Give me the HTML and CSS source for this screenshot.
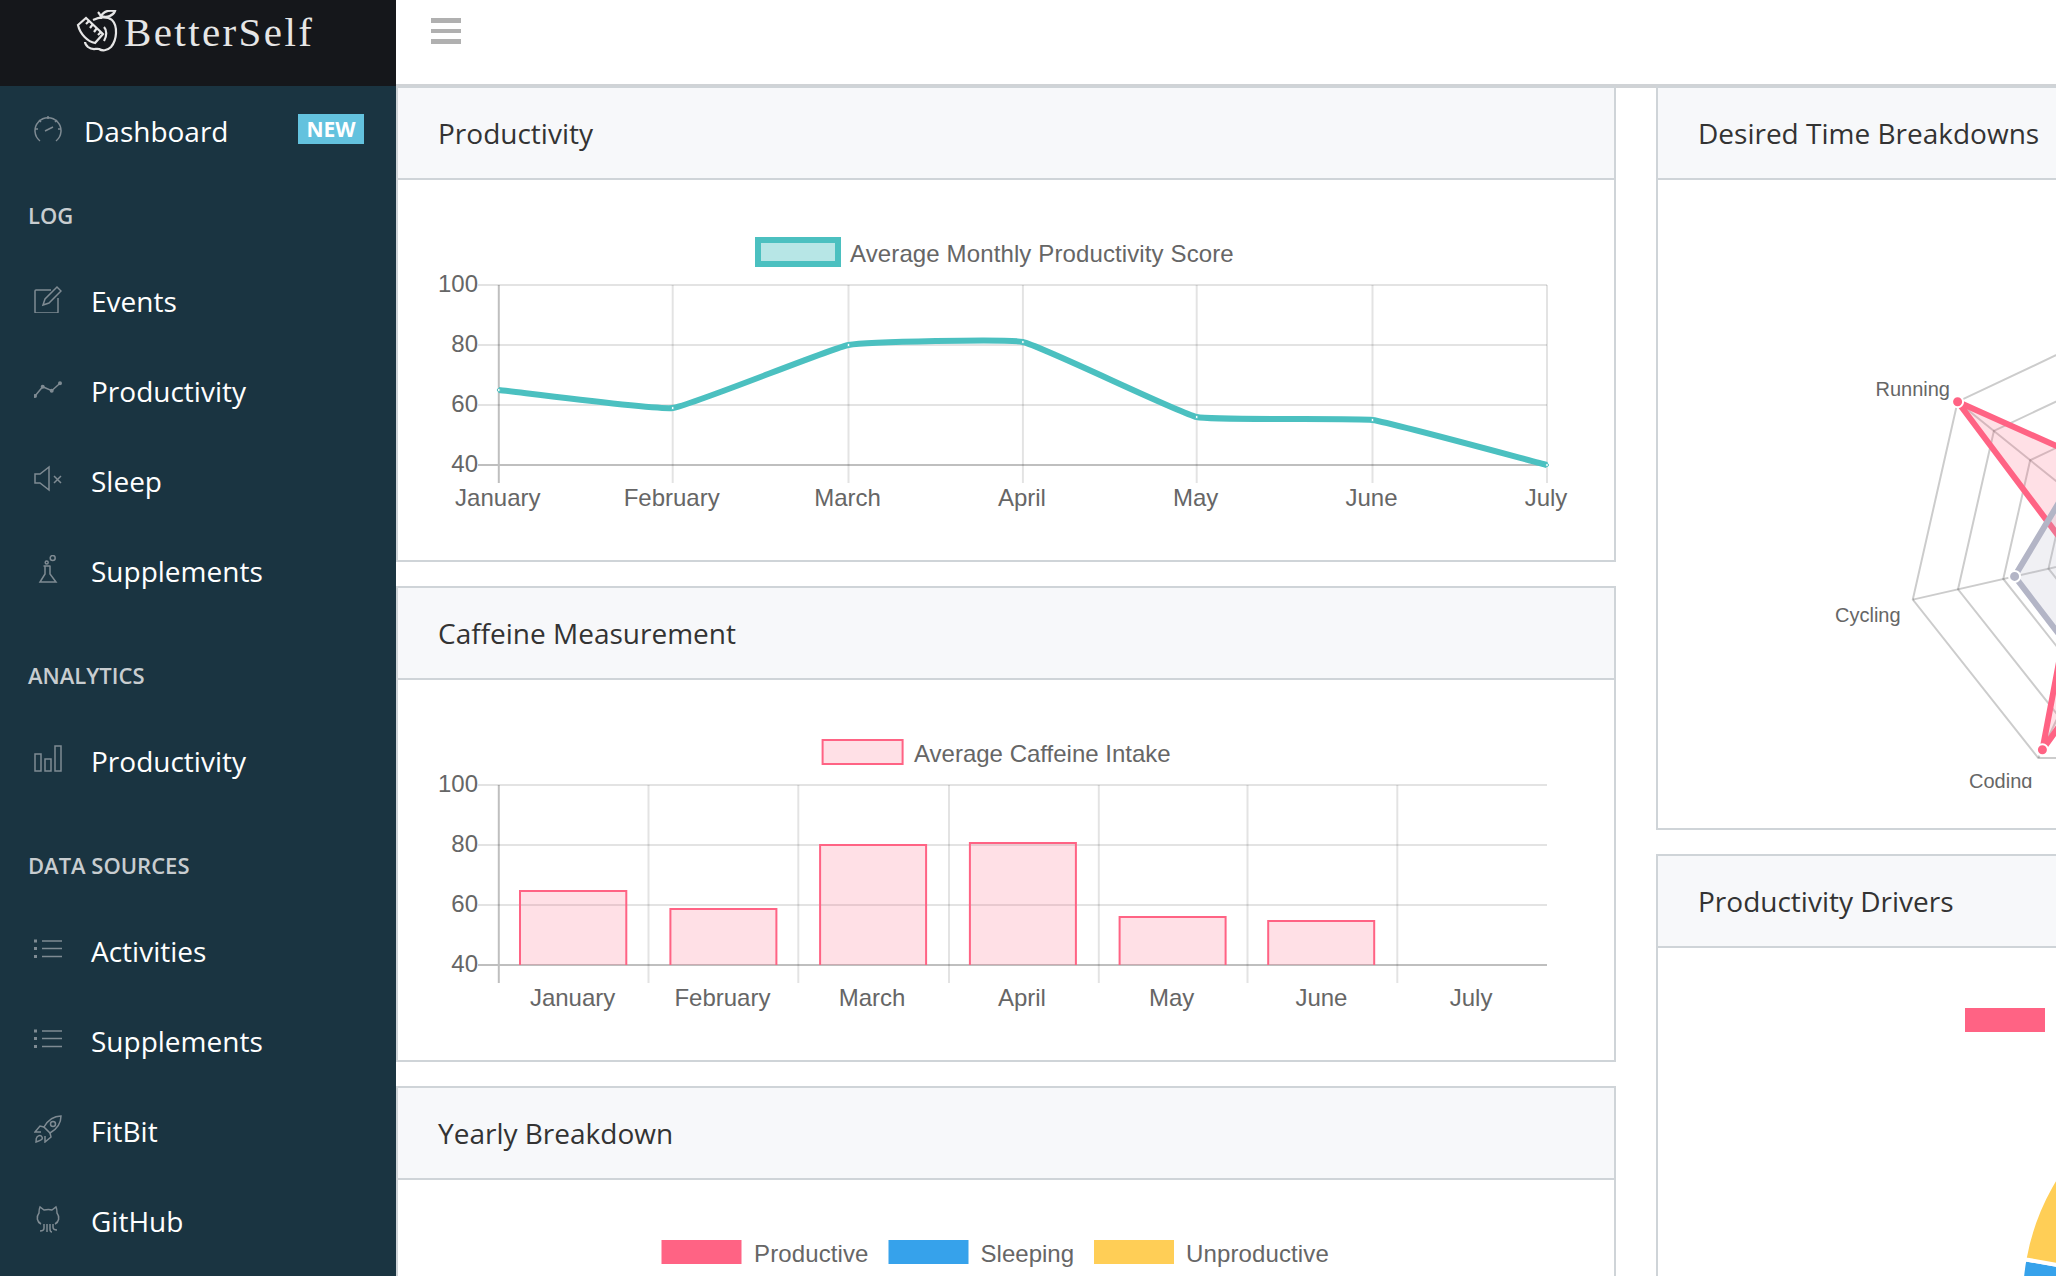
FILE: index.html
```html
<!DOCTYPE html>
<html lang="en">
<head>
  <meta charset="UTF-8">
  <title>BetterSelf</title>
  <meta name="viewport" content="width=device-width, initial-scale=1.0">
  <link rel="stylesheet" href="styles.css">
</head>
<body>
<svg class="sprite" width="0" height="0">
  <symbol id="icon-list" viewBox="0 0 28 28">
    <path class="icon-fill" d="M0 4.500h3v3H0zM0 12h3v3H0zM0 20h3v3H0z"/>
    <path d="M8 6h20M8 13.500h20M8 21.500h20"/>
  </symbol>
</svg>
<div class="layout">
  <aside class="sidebar">
    <div class="brand">
      <svg class="brand-logo" viewBox="0 0 42 42" width="42" height="42">
        <path d="M17 10c6-3 14-4 19 0 6 6 5 20-1 27-4 4-9 4-12 2-3-1-6 2-11-2-2-2-3-4-3-5"/>
        <path d="M25 9c0-3-1-5-3-7M25 6c3-5 9-6 14-5-2 5-8 7-14 5z"/>
        <path d="M2 15l8-7 17 16-8 9C12 32 4 24 2 15z"/>
        <path d="M13 11l-3 3M17 14l-3 4M21 18l-3 4M25 22l-3 3"/>
        <path d="M28 17c3 3 3 9 0 14"/>
      </svg>
      <span class="brand-name">BetterSelf</span>
    </div>
    <nav>
      <a class="nav-link nav-link-home" href="#">
        <svg class="nav-icon" viewBox="0 0 28 28"><path d="M6 26A13 13 0 1 1 22 26"/><path d="M14 1v3M5 5l2 2M23 5l-2 2M1 14h3M27 14h-3"/><path d="M11 16l8-4"/></svg>
        <span>Dashboard</span>
        <span class="badge">NEW</span>
      </a>
      <div class="nav-group">
        <div class="nav-title">LOG</div>
        <a class="nav-link" href="#">
          <svg class="nav-icon" viewBox="0 0 28 28"><path d="M17 5H2a1 1 0 0 0-1 1v21a1 1 0 0 0 1 1h21a1 1 0 0 0 1-1V13"/><path d="M9 20l2-6L23 2l4 4-12 12z"/></svg>
          <span>Events</span>
        </a>
        <a class="nav-link" href="#">
          <svg class="nav-icon" viewBox="0 0 28 28"><path d="M1 21l7.700-9.300 9 4L26 8.300"/><path class="icon-fill" d="M3 21a2 2 0 1 1-4 0 2 2 0 0 1 4 0zM10.700 11.700a2 2 0 1 1-4 0 2 2 0 0 1 4 0zM19.700 15.700a2 2 0 1 1-4 0 2 2 0 0 1 4 0zM28 8.300a2 2 0 1 1-4 0 2 2 0 0 1 4 0z"/></svg>
          <span>Productivity</span>
        </a>
        <a class="nav-link" href="#">
          <svg class="nav-icon" viewBox="0 0 28 28"><path d="M1 9h5l9-7v23l-9-7H1z"/><path d="M20 11l7 7M27 11l-7 7"/></svg>
          <span>Sleep</span>
        </a>
        <a class="nav-link" href="#">
          <svg class="nav-icon" viewBox="0 0 28 28"><circle cx="18.700" cy="3" r="2.500"/><circle cx="12.700" cy="7.500" r="1.500"/><path d="M9.500 11h7M11 11v8l-5 8h16l-6-8v-8"/></svg>
          <span>Supplements</span>
        </a>
      </div>
      <div class="nav-group">
        <div class="nav-title">ANALYTICS</div>
        <a class="nav-link" href="#">
          <svg class="nav-icon" viewBox="0 0 28 28"><path d="M1 9h6v17H1zM11 14h6v12h-6zM21 1h6v25h-6z"/></svg>
          <span>Productivity</span>
        </a>
      </div>
      <div class="nav-group">
        <div class="nav-title">DATA SOURCES</div>
        <a class="nav-link" href="#">
          <svg class="nav-icon"><use href="#icon-list"/></svg>
          <span>Activities</span>
        </a>
        <a class="nav-link" href="#">
          <svg class="nav-icon"><use href="#icon-list"/></svg>
          <span>Supplements</span>
        </a>
        <a class="nav-link" href="#">
          <svg class="nav-icon" viewBox="0 0 28 28"><path d="M27 1c-7 0-13 4-17 11l6 6c7-4 11-10 11-17z"/><circle cx="19" cy="9" r="2.500"/><path d="M10 12l-4-1-5 6h6M16 18l1 4-6 5v-6"/><path d="M3 22c2-2 4-2 5 0s0 3-6 5c0-2 0-4 1-5z"/></svg>
          <span>FitBit</span>
        </a>
        <a class="nav-link" href="#">
          <svg class="nav-icon" viewBox="0 0 28 28"><path d="M7 19C3 17 2 12 5 8c0-2 0-4 1-6l4 3c3-.6 6-.6 8 0l4-3c1 2 1 4 1 6 3 4 2 9-2 11"/><path d="M10 19v4c0 2-2 3-4 3M13 19v8M16 19v5c0 2 1 3 2 3M19 19v3c0 2 2 3 4 3"/></svg>
          <span>GitHub</span>
        </a>
      </div>
    </nav>
  </aside>

  <div class="main">
    <header class="topbar">
      <span class="burger"><i></i><i></i><i></i></span>
    </header>
    <div class="columns">
      <div class="column">
        <section class="card">
          <div class="card-header">Productivity</div>
          <svg class="chart" width="1216" height="380" viewBox="398 180 1216 380">
            <rect class="legend-line" x="758" y="240" width="80" height="24"/>
            <text class="legend-wide" x="850" y="262">Average Monthly Productivity Score</text>

            <path class="grid" d="M478 285H1547M478 345H1547M478 405H1547"/>
            <path class="grid" d="M672.700 285V483M848.500 285V483M1022.900 285V483M1196.700 285V483M1372.500 285V483M1547 285V483"/>
            <path class="grid-zero" d="M478 465H1547M498.800 285V483"/>

            <text class="tick-y" x="478" y="292">100</text>
            <text class="tick-y" x="478" y="352">80</text>
            <text class="tick-y" x="478" y="412">60</text>
            <text class="tick-y" x="478" y="472">40</text>

            <text class="tick-x" x="497.800" y="506">January</text>
            <text class="tick-x" x="671.700" y="506">February</text>
            <text class="tick-x" x="847.500" y="506">March</text>
            <text class="tick-x" x="1021.900" y="506">April</text>
            <text class="tick-x" x="1195.700" y="506">May</text>
            <text class="tick-x" x="1371.500" y="506">June</text>
            <text class="tick-x" x="1546" y="506">July</text>

            <path class="line" d="M498.800 390C516.300 391.800 655.700 410.200 672.700 408C690.700 405.700 830.500 348.400 848.500 345C865.400 341.800 1006.200 338.600 1022.900 342C1041.100 345.750 1178.500 412.900 1196.700 417C1213.400 420.700 1355.300 417.600 1372.500 420C1390.200 422.400 1529.500 460.500 1547 465"/>
            <circle class="line-point" cx="498.800" cy="390" r="1.500"/>
            <circle class="line-point" cx="672.700" cy="408" r="1.500"/>
            <circle class="line-point" cx="848.500" cy="345" r="1.500"/>
            <circle class="line-point" cx="1022.900" cy="342" r="1.500"/>
            <circle class="line-point" cx="1196.700" cy="417" r="1.500"/>
            <circle class="line-point" cx="1372.500" cy="420" r="1.500"/>
            <circle class="line-point" cx="1547" cy="465" r="1.500"/>
          </svg>
        </section>

        <section class="card">
          <div class="card-header">Caffeine Measurement</div>
          <svg class="chart" width="1216" height="380" viewBox="398 680 1216 380">
            <rect class="legend-bar" x="822.600" y="740" width="80" height="24"/>
            <text x="914" y="762">Average Caffeine Intake</text>

            <path class="grid" d="M478 785H1547M478 845H1547M478 905H1547"/>
            <path class="grid" d="M648.500 785V983M798.300 785V983M949 785V983M1098.800 785V983M1247.500 785V983M1397.300 785V983"/>
            <path class="grid-zero" d="M478 965H1547M498.800 785V983"/>

            <text class="tick-y" x="478" y="792">100</text>
            <text class="tick-y" x="478" y="852">80</text>
            <text class="tick-y" x="478" y="912">60</text>
            <text class="tick-y" x="478" y="972">40</text>

            <path class="bar" d="M520 965V891H626.300V965"/>
            <path class="bar" d="M670.400 965V909H776.400V965"/>
            <path class="bar" d="M820.100 965V845H926.100V965"/>
            <path class="bar" d="M969.900 965V843H1075.900V965"/>
            <path class="bar" d="M1119.600 965V917H1225.600V965"/>
            <path class="bar" d="M1268.200 965V921H1374.200V965"/>

            <text class="tick-x" x="572.600" y="1006">January</text>
            <text class="tick-x" x="722.400" y="1006">February</text>
            <text class="tick-x" x="872.100" y="1006">March</text>
            <text class="tick-x" x="1021.900" y="1006">April</text>
            <text class="tick-x" x="1171.600" y="1006">May</text>
            <text class="tick-x" x="1321.400" y="1006">June</text>
            <text class="tick-x" x="1471.100" y="1006">July</text>
          </svg>
        </section>

        <section class="card">
          <div class="card-header">Yearly Breakdown</div>
          <svg class="chart" width="1216" height="380" viewBox="398 1180 1216 380">
            <rect class="pink" x="661.500" y="1240" width="80" height="24"/>
            <text class="legend-wide" x="754" y="1262">Productive</text>
            <rect class="blue" x="888.500" y="1240" width="80" height="24"/>
            <text x="980.600" y="1262">Sleeping</text>
            <rect class="yellow" x="1094" y="1240" width="80" height="24"/>
            <text class="legend-wide" x="1186" y="1262">Unproductive</text>
          </svg>
        </section>
      </div>

      <div class="column">
        <section class="card">
          <div class="card-header">Desired Time Breakdowns</div>
          <div class="card-body-radar">
            <svg class="chart" width="1216" height="608" viewBox="1658 180 1216 608">
              <g transform="translate(2139 548)">
                <polygon class="ring" points="0,-232 181.400,-146.300 226.200,51.600 100.700,210 -100.700,210 -226.200,51.600 -181.400,-146.300"/>
                <polygon class="ring" transform="scale(.8)" points="0,-232 181.400,-146.300 226.200,51.600 100.700,210 -100.700,210 -226.200,51.600 -181.400,-146.300"/>
                <polygon class="ring" transform="scale(.6)" points="0,-232 181.400,-146.300 226.200,51.600 100.700,210 -100.700,210 -226.200,51.600 -181.400,-146.300"/>
                <polygon class="ring" transform="scale(.4)" points="0,-232 181.400,-146.300 226.200,51.600 100.700,210 -100.700,210 -226.200,51.600 -181.400,-146.300"/>
                <polygon class="ring" transform="scale(.2)" points="0,-232 181.400,-146.300 226.200,51.600 100.700,210 -100.700,210 -226.200,51.600 -181.400,-146.300"/>
                <path class="ring" d="M0 0V-232M0 0L181.400 -146.300M0 0L226.200 51.600M0 0L100.700 210M0 0L-100.700 210M0 0L-226.200 51.600M0 0L-181.400 -146.300"/>

                <polygon class="radar-pink" points="0,-65 87.100,-69.400 90.500,20.600 19.100,39.700 -96.600,201.800 -61.100,13.900 -181.400,-146.300"/>
                <polygon class="radar-gray" points="0,-150.800 107,-85.300 203.600,46.500 81.500,169.300 -56.400,117 -124.400,28.400 -72.600,-57.900"/>

                <circle class="point-pink" cx="-181.400" cy="-146.300" r="5.500"/>
                <circle class="point-pink" cx="-96.600" cy="201.800" r="5.500"/>
                <circle class="point-pink" cx="-61.100" cy="13.900" r="5.500"/>
                <circle class="point-gray" cx="-124.400" cy="28.400" r="5.500"/>
                <circle class="point-gray" cx="-72.600" cy="-57.900" r="5.500"/>
                <circle class="point-gray" cx="-56.400" cy="117" r="5.500"/>
              </g>
              <text class="radar-label tick-y" x="1950" y="396">Running</text>
              <text class="radar-label" x="1835" y="622">Cycling</text>
              <text class="radar-label" x="1969" y="788">Coding</text>
            </svg>
          </div>
        </section>

        <section class="card">
          <div class="card-header">Productivity Drivers</div>
          <svg class="chart" width="1216" height="500" viewBox="1658 948 1216 500">
            <rect class="pink" x="1965" y="1008" width="80" height="24"/>
            <path class="slice pink" d="M2250 1299L2250 1070A229 229 0 1 1 2051.700 1413.500Z"/>
            <path class="slice blue" d="M2250 1299L2051.700 1413.500A229 229 0 0 1 2024.500 1259.200Z"/>
            <path class="slice yellow" d="M2250 1299L2024.500 1259.200A229 229 0 0 1 2250 1070Z"/>
          </svg>
        </section>
      </div>
    </div>
  </div>
</div>
</body>
</html>
```
FILE: styles.css
```css
html, body {
  margin: 0;
  height: 100%;
  overflow: hidden;
}
body {
  background: #fff;
  color: #333;
  font-family: 'Open Sans', sans-serif;
}
.sprite {
  position: absolute;
}
.layout {
  display: flex;
  height: 100%;
}

/* Sidebar */
.sidebar {
  flex: 0 0 396px;
  background: #1a3441;
}
.brand {
  height: 86px;
  box-sizing: border-box;
  padding: 10px 0 0 76px;
  background: #15171b;
  display: flex;
  align-items: flex-start;
  gap: 6px;
}
.brand-logo {
  fill: none;
  stroke: #e6e6e6;
  stroke-width: 2.200;
}
.brand-name {
  font-family: 'Liberation Serif', serif;
  font-size: 41px;
  line-height: 44px;
  letter-spacing: 2.400px;
  color: #e6e6e6;
}
.nav-link {
  display: flex;
  align-items: center;
  height: 90px;
  padding-left: 34px;
  color: #fff;
  font-size: 28px;
  text-decoration: none;
}
.nav-icon {
  flex: none;
  width: 28px;
  height: 28px;
  margin: -4px 29px 0 0;
  fill: none;
  stroke: #7f8b93;
  stroke-width: 1.500;
}
.icon-fill {
  fill: #7f8b93;
  stroke: none;
}
.nav-link-home .nav-icon {
  margin-right: 22px;
}
.badge {
  margin: -4px 32px 0 auto;
  width: 66px;
  height: 30px;
  background: #63c2de;
  color: #fff;
  font-size: 21px;
  font-weight: 700;
  line-height: 30px;
  text-align: center;
}
.nav-group + .nav-group {
  margin-top: 20px;
}
.nav-title {
  height: 80px;
  padding-left: 28px;
  color: #c8cdd0;
  font-size: 22px;
  font-weight: 600;
  line-height: 78px;
}

/* Main */
.main {
  flex: 1;
  min-width: 0;
}
.topbar {
  height: 84px;
  border-bottom: 4px solid #d0d3d6;
}
.burger {
  display: flex;
  flex-direction: column;
  gap: 6px;
  width: 30px;
  padding: 18px 0 0 35px;
}
.burger i {
  height: 4.500px;
  background: #b0b0b0;
}
.columns {
  display: grid;
  grid-template-columns: 1220px 1220px;
  column-gap: 40px;
  margin-top: -2px;
}
.card {
  margin-bottom: 24px;
  border: 2px solid #cfd4d8;
  background: #fff;
}
.card-header {
  height: 90px;
  padding-left: 40px;
  border-bottom: 2px solid #cfd4d8;
  background: #f7f8fa;
  font-size: 28px;
  line-height: 90px;
  color: #333;
}
.card-body-radar {
  padding-bottom: 40px;
}

/* Charts */
.chart {
  display: block;
}
.chart text {
  font-family: 'Liberation Sans', Arial, sans-serif;
  font-size: 24px;
  fill: #666;
}
.chart .legend-wide {
  letter-spacing: .12px;
}
.chart .tick-y {
  text-anchor: end;
}
.chart .tick-x {
  text-anchor: middle;
}
.chart .radar-label {
  font-size: 20px;
}
.grid {
  fill: none;
  stroke: rgba(0, 0, 0, .11);
  stroke-width: 2;
}
.grid-zero {
  fill: none;
  stroke: rgba(0, 0, 0, .25);
  stroke-width: 2;
}
.legend-line {
  fill: rgba(75, 192, 192, .4);
  stroke: #4bc0c0;
  stroke-width: 6;
}
.line {
  fill: none;
  stroke: #4bc0c0;
  stroke-width: 6;
}
.line-point {
  fill: #fff;
  stroke: #4bc0c0;
  stroke-width: 1;
}
.legend-bar {
  fill: rgba(255, 99, 132, .2);
  stroke: #ff6384;
  stroke-width: 2;
}
.bar {
  fill: rgba(255, 99, 132, .2);
  stroke: #ff6384;
  stroke-width: 2;
}
.pink { fill: #ff6384; }
.blue { fill: #36a2eb; }
.yellow { fill: #ffce56; }
.slice {
  stroke: #fff;
  stroke-width: 4;
}
.ring {
  fill: none;
  stroke: rgba(0, 0, 0, .2);
  stroke-width: 2;
  vector-effect: non-scaling-stroke;
}
.radar-pink {
  fill: rgba(255, 99, 132, .2);
  stroke: #ff6384;
  stroke-width: 6;
}
.radar-gray {
  fill: rgba(179, 181, 198, .2);
  stroke: #b3b5c6;
  stroke-width: 6;
}
.point-pink,
.point-gray {
  stroke: #fff;
  stroke-width: 2;
}
.point-pink { fill: #ff6384; }
.point-gray { fill: #b3b5c6; }
```
